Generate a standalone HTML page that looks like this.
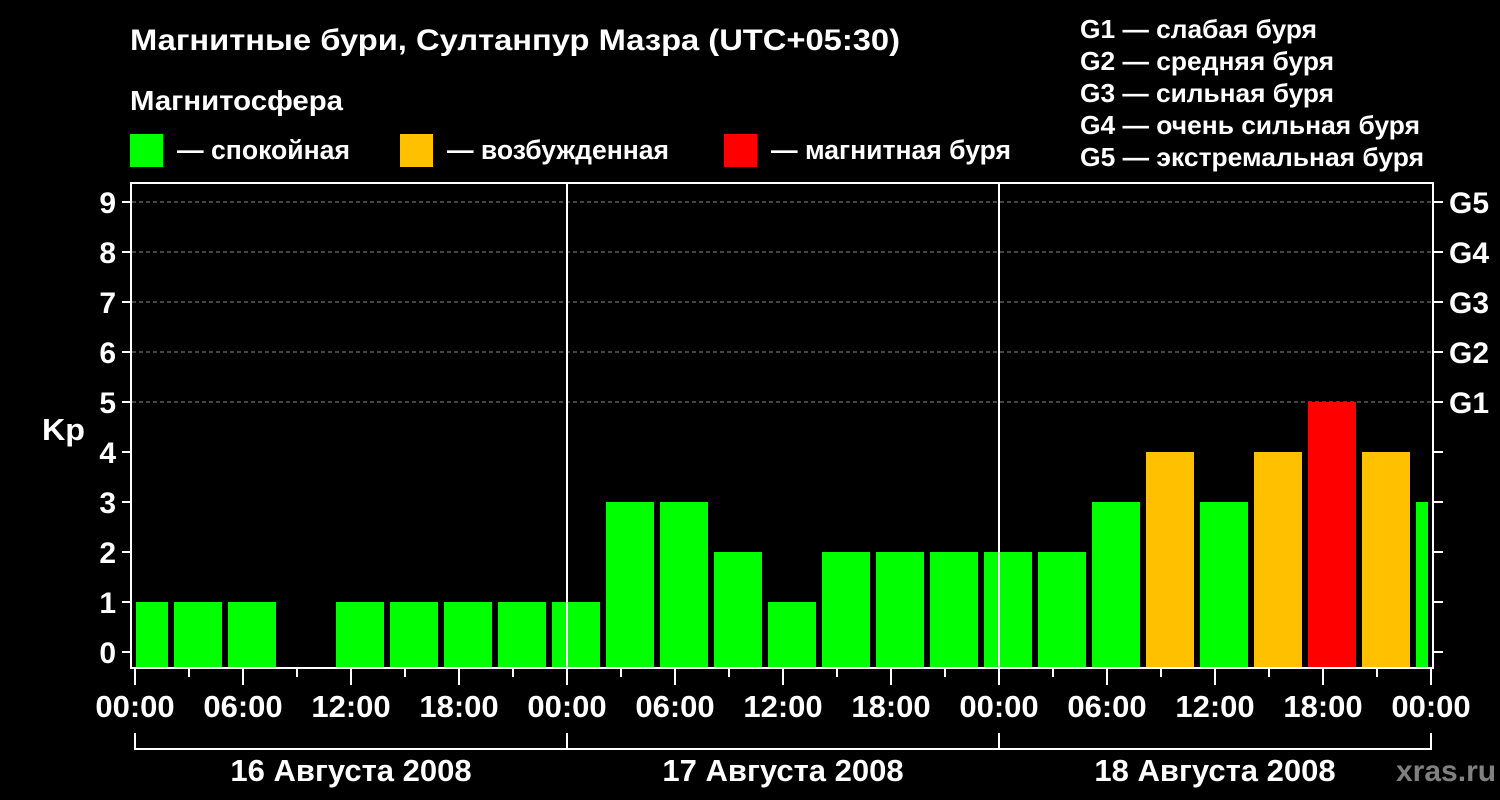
<!DOCTYPE html>
<html><head><meta charset="utf-8"><style>
html,body{margin:0;padding:0;background:#000;width:1500px;height:800px;overflow:hidden}
svg text{font-family:"Liberation Sans",sans-serif;font-weight:bold;fill:#fff}
</style></head><body>
<svg width="1500" height="800" xmlns="http://www.w3.org/2000/svg">
<text x="130" y="50" font-size="30" textLength="770" lengthAdjust="spacingAndGlyphs">Магнитные бури, Султанпур Мазра (UTC+05:30)</text>
<text x="130" y="110" font-size="28" textLength="213" lengthAdjust="spacingAndGlyphs">Магнитосфера</text>
<rect x="130" y="134" width="33" height="33" fill="#00ff00"/>
<text x="177" y="159" font-size="27" textLength="173" lengthAdjust="spacingAndGlyphs">— спокойная</text>
<rect x="400" y="134" width="33" height="33" fill="#ffc000"/>
<text x="447" y="159" font-size="27" textLength="222" lengthAdjust="spacingAndGlyphs">— возбужденная</text>
<rect x="724" y="134" width="33" height="33" fill="#ff0000"/>
<text x="771" y="159" font-size="27" textLength="240" lengthAdjust="spacingAndGlyphs">— магнитная буря</text>
<g font-size="26">
<text x="1080" y="38" textLength="237" lengthAdjust="spacingAndGlyphs">G1 — слабая буря</text>
<text x="1080" y="70" textLength="254" lengthAdjust="spacingAndGlyphs">G2 — средняя буря</text>
<text x="1080" y="102" textLength="254" lengthAdjust="spacingAndGlyphs">G3 — сильная буря</text>
<text x="1080" y="134" textLength="340" lengthAdjust="spacingAndGlyphs">G4 — очень сильная буря</text>
<text x="1080" y="166" textLength="344" lengthAdjust="spacingAndGlyphs">G5 — экстремальная буря</text>
</g>
<g stroke="#888" stroke-width="1" stroke-dasharray="4,3">
<line x1="132" y1="202" x2="1432" y2="202"/><line x1="132" y1="252" x2="1432" y2="252"/>
<line x1="132" y1="302" x2="1432" y2="302"/><line x1="132" y1="352" x2="1432" y2="352"/>
<line x1="132" y1="402" x2="1432" y2="402"/>
</g>
<g>
<rect x="136" y="602" width="32" height="66" fill="#0f0"/>
<rect x="174" y="602" width="48" height="66" fill="#0f0"/>
<rect x="228" y="602" width="48" height="66" fill="#0f0"/>
<rect x="336" y="602" width="48" height="66" fill="#0f0"/>
<rect x="390" y="602" width="48" height="66" fill="#0f0"/>
<rect x="444" y="602" width="48" height="66" fill="#0f0"/>
<rect x="498" y="602" width="48" height="66" fill="#0f0"/>
<rect x="552" y="602" width="48" height="66" fill="#0f0"/>
<rect x="606" y="502" width="48" height="166" fill="#0f0"/>
<rect x="660" y="502" width="48" height="166" fill="#0f0"/>
<rect x="714" y="552" width="48" height="116" fill="#0f0"/>
<rect x="768" y="602" width="48" height="66" fill="#0f0"/>
<rect x="822" y="552" width="48" height="116" fill="#0f0"/>
<rect x="876" y="552" width="48" height="116" fill="#0f0"/>
<rect x="930" y="552" width="48" height="116" fill="#0f0"/>
<rect x="984" y="552" width="48" height="116" fill="#0f0"/>
<rect x="1038" y="552" width="48" height="116" fill="#0f0"/>
<rect x="1092" y="502" width="48" height="166" fill="#0f0"/>
<rect x="1146" y="452" width="48" height="216" fill="#ffc000"/>
<rect x="1200" y="502" width="48" height="166" fill="#0f0"/>
<rect x="1254" y="452" width="48" height="216" fill="#ffc000"/>
<rect x="1308" y="402" width="48" height="266" fill="#f00"/>
<rect x="1362" y="452" width="48" height="216" fill="#ffc000"/>
<rect x="1416" y="502" width="12" height="166" fill="#0f0"/>
</g>
<g stroke="#fff" stroke-width="2" fill="none">
<path d="M131 183V668H1433V183Z"/>
<line x1="567" y1="183" x2="567" y2="668"/><line x1="999" y1="183" x2="999" y2="668"/>
<path d="M122 202h9M122 252h9M122 302h9M122 352h9M122 402h9M122 452h9M122 502h9M122 552h9M122 602h9M122 652h9"/>
<path d="M1433 202h10M1433 252h10M1433 302h10M1433 352h10M1433 402h10M1433 452h10M1433 502h10M1433 552h10M1433 602h10M1433 652h10"/>
<path d="M135 668v17M243 668v17M351 668v17M459 668v17M567 668v17M675 668v17M783 668v17M891 668v17M999 668v17M1107 668v17M1215 668v17M1323 668v17M1431 668v17"/>
<path d="M189 668v9M297 668v9M405 668v9M513 668v9M621 668v9M729 668v9M837 668v9M945 668v9M1053 668v9M1161 668v9M1269 668v9M1377 668v9"/>
<path d="M135 733v16H1431V733M567 733v16M999 733v16"/>
</g>
<g font-size="30" text-anchor="end">
<text x="116" y="213">9</text><text x="116" y="263">8</text><text x="116" y="313">7</text>
<text x="116" y="363">6</text><text x="116" y="413">5</text><text x="116" y="463">4</text>
<text x="116" y="513">3</text><text x="116" y="563">2</text><text x="116" y="613">1</text>
<text x="116" y="663">0</text>
</g>
<text x="42" y="440" font-size="31" textLength="43" lengthAdjust="spacingAndGlyphs">Kp</text>
<g font-size="30">
<text x="1449" y="213">G5</text><text x="1449" y="263">G4</text><text x="1449" y="313">G3</text>
<text x="1449" y="363">G2</text><text x="1449" y="413">G1</text>
</g>
<g font-size="31" text-anchor="middle">
<text x="135" y="717">00:00</text><text x="243" y="717">06:00</text><text x="351" y="717">12:00</text>
<text x="459" y="717">18:00</text><text x="567" y="717">00:00</text><text x="675" y="717">06:00</text>
<text x="783" y="717">12:00</text><text x="891" y="717">18:00</text><text x="999" y="717">00:00</text>
<text x="1107" y="717">06:00</text><text x="1215" y="717">12:00</text><text x="1323" y="717">18:00</text>
<text x="1431" y="717">00:00</text>
<text x="351" y="781" font-size="31">16 Августа 2008</text>
<text x="783" y="781" font-size="31">17 Августа 2008</text>
<text x="1215" y="781" font-size="31">18 Августа 2008</text>
</g>
<text x="1396" y="781" font-size="30" style="fill:#808080">xras.ru</text>
</svg>
</body></html>
